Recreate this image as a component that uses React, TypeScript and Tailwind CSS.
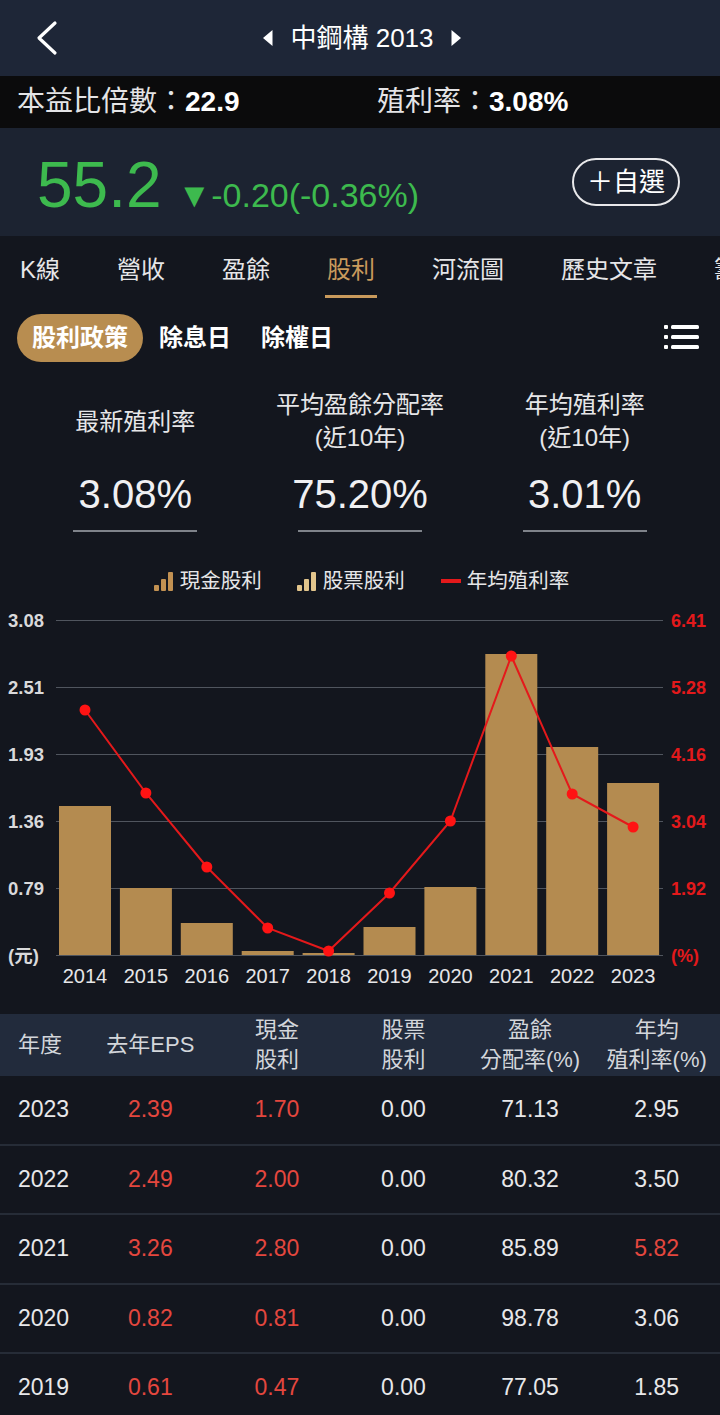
import React from "react";

const FONT = { fontFamily: '"Liberation Sans", "Noto Sans CJK TC", sans-serif' };

const bars = [
  { y: "2014", top: 807, dot: 711 },
  { y: "2015", top: 889, dot: 794 },
  { y: "2016", top: 924, dot: 868 },
  { y: "2017", top: 952, dot: 929 },
  { y: "2018", top: 954, dot: 952 },
  { y: "2019", top: 928, dot: 894 },
  { y: "2020", top: 888, dot: 822 },
  { y: "2021", top: 655, dot: 657 },
  { y: "2022", top: 748, dot: 795 },
  { y: "2023", top: 784, dot: 828 },
];

const OFF = 600; // svg top offset in page coords

function Chart() {
  const grid = [621, 688, 755, 822, 889, 956];
  const left = ["3.08", "2.51", "1.93", "1.36", "0.79", "(元)"];
  const right = ["6.41", "5.28", "4.16", "3.04", "1.92", "(%)"];
  const cx = (i: number) => 85 + i * 60.9;
  const pts = bars.map((b, i) => `${cx(i)},${b.dot - OFF}`).join(" ");
  return (
    <svg width="720" height="400" viewBox="0 0 720 400" className="block">
      {grid.map((g, i) => (
        <line key={i} x1="56" x2="663" y1={g - OFF + 0.5} y2={g - OFF + 0.5} stroke="#50555e" strokeWidth="1" />
      ))}
      {grid.map((g, i) => (
        <text key={"l" + i} x="8" y={g - OFF + 6.5} fontSize="18.5" fontWeight="700" fill="#d9d9db" style={FONT}>
          {left[i]}
        </text>
      ))}
      {grid.map((g, i) => (
        <text key={"r" + i} x="671" y={g - OFF + 6.5} fontSize="18" fontWeight="700" fill="#e3191b" style={FONT}>
          {right[i]}
        </text>
      ))}
      {bars.map((b, i) => (
        <rect key={b.y} x={cx(i) - 26} y={b.top - OFF} width="52" height={956 - b.top} fill="#b48b50" />
      ))}
      <polyline points={pts} fill="none" stroke="#e4191b" strokeWidth="2" />
      {bars.map((b, i) => (
        <circle key={"d" + b.y} cx={cx(i)} cy={b.dot - OFF} r="5.5" fill="#ff1313" />
      ))}
      {bars.map((b, i) => (
        <text key={"t" + b.y} x={cx(i)} y={984 - OFF} fontSize="20" fill="#e6e6e8" textAnchor="middle" style={FONT}>
          {b.y}
        </text>
      ))}
    </svg>
  );
}

function LegendBars({ color }: { color: string }) {
  return (
    <svg width="22" height="22" viewBox="0 0 22 22" className="block">
      <rect x="1" y="15" width="5" height="6" rx="1" fill={color} />
      <rect x="8" y="9" width="5" height="12" rx="1" fill={color} />
      <rect x="15" y="2" width="5" height="19" rx="1" fill={color} />
    </svg>
  );
}

const rows = [
  ["2023", "2.39", "1.70", "0.00", "71.13", "2.95", false],
  ["2022", "2.49", "2.00", "0.00", "80.32", "3.50", false],
  ["2021", "3.26", "2.80", "0.00", "85.89", "5.82", true],
  ["2020", "0.82", "0.81", "0.00", "98.78", "3.06", false],
  ["2019", "0.61", "0.47", "0.00", "77.05", "1.85", false],
] as const;

export default function App() {
  return (
    <div className="w-[720px] h-[1415px] overflow-hidden bg-[#13161e] text-white" style={FONT}>
      {/* Header */}
      <div className="h-[76px] bg-[#1e2637] flex items-center relative">
        <div className="pl-[33px] w-[100px]">
          <svg width="28" height="36" viewBox="0 0 28 36">
            <path d="M22 3 L6 18 L22 33" fill="none" stroke="#ffffff" strokeWidth="3.2" strokeLinecap="round" strokeLinejoin="round" />
          </svg>
        </div>
        <div className="flex-1 flex justify-center items-center gap-[17px] pr-[96px]">
          <svg width="11" height="18" viewBox="0 0 11 18"><path d="M10.5 1 L1 9 L10.5 17 Z" fill="#ffffff" /></svg>
          <span className="text-[26px] leading-none">中鋼構 2013</span>
          <svg width="11" height="18" viewBox="0 0 11 18"><path d="M0.5 1 L10 9 L0.5 17 Z" fill="#ffffff" /></svg>
        </div>
      </div>

      {/* PE bar */}
      <div className="h-[52px] bg-[#0b0b0c] flex items-center text-[28px] leading-none">
        <div className="pl-[17px] w-[377px] text-[#e4e4e6]">
          本益比倍數：<span className="font-bold text-white">22.9</span>
        </div>
        <div className="text-[#e4e4e6]">
          殖利率：<span className="font-bold text-white">3.08%</span>
        </div>
      </div>

      {/* Price row */}
      <div className="h-[108px] bg-[#1c2331] flex items-center pl-[37px] pr-[40px]">
        <div className="flex items-baseline flex-1 text-[#3dba4e] pt-[6px]">
          <span className="text-[64px] leading-none font-medium">55.2</span>
          <span className="text-[34px] leading-none ml-[16px]">▼-0.20(-0.36%)</span>
        </div>
        <div className="w-[108px] h-[48px] rounded-full border-2 border-[#e8e8ea] flex items-center justify-center text-[26px] leading-none text-white">
          ＋自選
        </div>
      </div>

      {/* Tabs */}
      <div className="h-[66px] flex items-start pl-[20px] gap-[57px] whitespace-nowrap overflow-hidden text-[24px] leading-none">
        <div className="pt-[22px] text-[#e6e6e8]">K線</div>
        <div className="pt-[22px] text-[#e6e6e8]">營收</div>
        <div className="pt-[22px] text-[#e6e6e8]">盈餘</div>
        <div className="pt-[22px] flex flex-col items-stretch text-[#c99a5c]">
          <span>股利</span>
          <div className="h-[3px] bg-[#c99a5c] mt-[13px] -mx-[2px]" />
        </div>
        <div className="pt-[22px] text-[#e6e6e8]">河流圖</div>
        <div className="pt-[22px] text-[#e6e6e8]">歷史文章</div>
        <div className="pt-[22px] text-[#e6e6e8]">籌碼</div>
      </div>

      {/* Sub tabs */}
      <div className="h-[60px] flex items-center pl-[17px] pr-[20px] pt-[12px]">
        <div className="h-[48px] w-[126px] rounded-full bg-[#b88d50] flex items-center justify-center text-[24px] font-bold leading-none">
          股利政策
        </div>
        <div className="ml-[16px] text-[24px] font-bold leading-none">除息日</div>
        <div className="ml-[30px] text-[24px] font-bold leading-none">除權日</div>
        <div className="flex-1" />
        <svg width="36" height="30" viewBox="0 0 36 30">
          <rect x="0" y="2" width="4" height="4" rx="1" fill="#fff" />
          <rect x="7" y="2" width="28" height="4" rx="1.5" fill="#fff" />
          <rect x="0" y="12" width="4" height="4" rx="1" fill="#fff" />
          <rect x="7" y="12" width="28" height="4" rx="1.5" fill="#fff" />
          <rect x="0" y="22" width="4" height="4" rx="1" fill="#fff" />
          <rect x="7" y="22" width="28" height="4" rx="1.5" fill="#fff" />
        </svg>
      </div>

      {/* Stats */}
      <div className="grid grid-cols-3 px-[23px] pt-[26px]">
        {[
          ["最新殖利率", null, "3.08%"],
          ["平均盈餘分配率", "(近10年)", "75.20%"],
          ["年均殖利率", "(近10年)", "3.01%"],
        ].map(([a, b, v]) => (
          <div key={a as string} className="flex flex-col items-center">
            <div className="h-[66px] flex flex-col items-center justify-center text-[24px] leading-[33px] text-[#e6e6e8]">
              <span>{a}</span>
              {b && <span>{b}</span>}
            </div>
            <div className="mt-[20px] text-[40px] leading-none text-[#f0f0f2]">{v}</div>
            <div className="mt-[16px] w-[124px] h-[2px] bg-[#7f838a]" />
          </div>
        ))}
      </div>

      {/* Legend */}
      <div className="flex items-center justify-center mt-[38px] text-[20.5px] leading-none text-[#e6e6e8] pl-[2px]">
        <LegendBars color="#c29152" />
        <span className="ml-[5px]">現金股利</span>
        <span className="ml-[34px]" />
        <LegendBars color="#e2c58c" />
        <span className="ml-[5px]">股票股利</span>
        <div className="ml-[36px] w-[20px] h-[4px] bg-[#e3191b]" />
        <span className="ml-[6px]">年均殖利率</span>
      </div>

      {/* Chart */}
      <div className="mt-[7px]">
        <Chart />
      </div>

      {/* Table */}
      <div className="mt-[15px]">
        <div className="h-[62px] bg-[#222b3c] grid grid-cols-[87px_repeat(5,1fr)] items-center text-[22px] leading-[30px] text-[#d3d6db]">
          <div className="pl-[18px]">年度</div>
          <div className="text-center">去年EPS</div>
          <div className="text-center">現金<br />股利</div>
          <div className="text-center">股票<br />股利</div>
          <div className="text-center">盈餘<br />分配率(%)</div>
          <div className="text-center">年均<br />殖利率(%)</div>
        </div>
        {rows.map((r) => (
          <div
            key={r[0]}
            className="h-[69.5px] border-b-2 border-[#262c37] grid grid-cols-[87px_repeat(5,1fr)] items-center text-[23px] leading-none"
          >
            <div className="pl-[18px] text-[#e8e8ea]">{r[0]}</div>
            <div className="text-center text-[#e4473e]">{r[1]}</div>
            <div className="text-center text-[#e4473e]">{r[2]}</div>
            <div className="text-center text-[#e8e8ea]">{r[3]}</div>
            <div className="text-center text-[#e8e8ea]">{r[4]}</div>
            <div className={"text-center " + (r[6] ? "text-[#e4473e]" : "text-[#e8e8ea]")}>{r[5]}</div>
          </div>
        ))}
      </div>
    </div>
  );
}
